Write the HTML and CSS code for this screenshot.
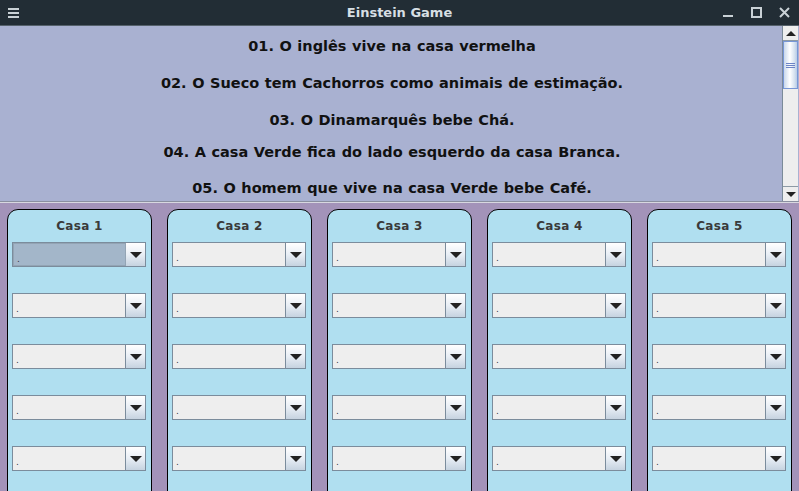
FILE: index.html
```html
<!DOCTYPE html>
<html>
<head>
<meta charset="utf-8">
<link rel="stylesheet" href="styles.css">
</head>
<body>
<div class="window">
  <div class="titlebar">
    <svg class="menu-icon" width="11" height="10" viewBox="0 0 11 10"><rect x="0" y="0" width="11" height="2" fill="#c9d1d6"/><rect x="0" y="4" width="11" height="2" fill="#c9d1d6"/><rect x="0" y="8" width="11" height="2" fill="#c9d1d6"/></svg>
    <div class="title">Einstein Game</div>
    <div class="controls">
      <svg width="11" height="11" viewBox="0 0 11 11"><rect x="0" y="8" width="10" height="2" fill="#c9d1d6"/></svg>
      <svg width="11" height="11" viewBox="0 0 11 11"><rect x="1" y="1" width="9" height="9" fill="none" stroke="#c9d1d6" stroke-width="2"/></svg>
      <svg width="11" height="11" viewBox="0 0 11 11"><path d="M1 1 L10 10 M10 1 L1 10" stroke="#c9d1d6" stroke-width="2"/></svg>
    </div>
  </div>
  <div class="rules">
    <div class="rules-text">
      <p class="rule r1">01. O inglês vive na casa vermelha</p>
      <p class="rule r2">02. O Sueco tem Cachorros como animais de estimação.</p>
      <p class="rule r3">03. O Dinamarquês bebe Chá.</p>
      <p class="rule r4">04. A casa Verde fica do lado esquerdo da casa Branca.</p>
      <p class="rule r5">05. O homem que vive na casa Verde bebe Café.</p>
    </div>
    <div class="scrollbar">
      <div class="sb-btn"><span class="tri-up"></span></div>
      <div class="sb-thumb"><span class="grip"></span></div>
      <div class="sb-track"></div>
      <div class="sb-btn sb-btn-down"><span class="tri-down"></span></div>
    </div>
  </div>
  <div class="houses">
    <div class="house">
      <div class="house-title">Casa 1</div>
      <div class="combos">
        <div class="combo selected"><div class="field">.</div><div class="arrow"><span class="tri-down"></span></div></div>
        <div class="combo"><div class="field">.</div><div class="arrow"><span class="tri-down"></span></div></div>
        <div class="combo"><div class="field">.</div><div class="arrow"><span class="tri-down"></span></div></div>
        <div class="combo"><div class="field">.</div><div class="arrow"><span class="tri-down"></span></div></div>
        <div class="combo"><div class="field">.</div><div class="arrow"><span class="tri-down"></span></div></div>
      </div>
    </div>
    <div class="house">
      <div class="house-title">Casa 2</div>
      <div class="combos">
        <div class="combo"><div class="field">.</div><div class="arrow"><span class="tri-down"></span></div></div>
        <div class="combo"><div class="field">.</div><div class="arrow"><span class="tri-down"></span></div></div>
        <div class="combo"><div class="field">.</div><div class="arrow"><span class="tri-down"></span></div></div>
        <div class="combo"><div class="field">.</div><div class="arrow"><span class="tri-down"></span></div></div>
        <div class="combo"><div class="field">.</div><div class="arrow"><span class="tri-down"></span></div></div>
      </div>
    </div>
    <div class="house">
      <div class="house-title">Casa 3</div>
      <div class="combos">
        <div class="combo"><div class="field">.</div><div class="arrow"><span class="tri-down"></span></div></div>
        <div class="combo"><div class="field">.</div><div class="arrow"><span class="tri-down"></span></div></div>
        <div class="combo"><div class="field">.</div><div class="arrow"><span class="tri-down"></span></div></div>
        <div class="combo"><div class="field">.</div><div class="arrow"><span class="tri-down"></span></div></div>
        <div class="combo"><div class="field">.</div><div class="arrow"><span class="tri-down"></span></div></div>
      </div>
    </div>
    <div class="house">
      <div class="house-title">Casa 4</div>
      <div class="combos">
        <div class="combo"><div class="field">.</div><div class="arrow"><span class="tri-down"></span></div></div>
        <div class="combo"><div class="field">.</div><div class="arrow"><span class="tri-down"></span></div></div>
        <div class="combo"><div class="field">.</div><div class="arrow"><span class="tri-down"></span></div></div>
        <div class="combo"><div class="field">.</div><div class="arrow"><span class="tri-down"></span></div></div>
        <div class="combo"><div class="field">.</div><div class="arrow"><span class="tri-down"></span></div></div>
      </div>
    </div>
    <div class="house">
      <div class="house-title">Casa 5</div>
      <div class="combos">
        <div class="combo"><div class="field">.</div><div class="arrow"><span class="tri-down"></span></div></div>
        <div class="combo"><div class="field">.</div><div class="arrow"><span class="tri-down"></span></div></div>
        <div class="combo"><div class="field">.</div><div class="arrow"><span class="tri-down"></span></div></div>
        <div class="combo"><div class="field">.</div><div class="arrow"><span class="tri-down"></span></div></div>
        <div class="combo"><div class="field">.</div><div class="arrow"><span class="tri-down"></span></div></div>
      </div>
    </div>
  </div>
</div>
</body>
</html>
```
FILE: styles.css
```css
* { box-sizing: border-box; }
html, body { margin: 0; padding: 0; }
body {
  width: 799px;
  height: 491px;
  overflow: hidden;
  font-family: "DejaVu Sans", sans-serif;
  background: #a393b9;
}
.window { display: flex; flex-direction: column; height: 491px; }

.titlebar {
  height: 26px;
  flex: none;
  background: #222d35;
  border-bottom: 1px solid #55616b;
  display: grid;
  grid-template-columns: 1fr auto 1fr;
  align-items: center;
  padding: 0 9px 0 8px;
}
.menu-icon { margin-top: 1px; }
.title {
  text-align: center;
  color: #d7dfe4;
  font-weight: bold;
  font-size: 13px;
  padding-left: 1px;
}
.controls { display: flex; gap: 17px; align-items: center; justify-self: end; }
.controls svg { display: block; }

.rules {
  height: 176px;
  flex: none;
  display: flex;
  background: #a9b1d1;
  border-bottom: 1px solid #8a8fa0;
}
.rules-text { flex: 1; }
.rule {
  margin: 0;
  height: 20px;
  line-height: 20px;
  text-align: center;
  font-size: 14.5px;
  font-weight: bold;
  word-spacing: 0.5px;
  color: #111111;
  padding-left: 2px;
}
.r1 { margin-top: 10px; }
.r2 { margin-top: 17px; }
.r3 { margin-top: 17px; }
.r4 { margin-top: 12px; }
.r5 { margin-top: 16px; }

.scrollbar {
  width: 16px;
  flex: none;
  display: flex;
  flex-direction: column;
  background: #eeeeee;
  border-left: 1px solid #7b8b99;
  margin-right: 1px;
}
.sb-btn {
  height: 15px;
  flex: none;
  background: #eeeeee;
  border-bottom: 1px solid #8d9aa5;
  display: flex;
  align-items: center;
  justify-content: center;
}
.sb-btn-down { border-bottom: none; border-top: 1px solid #8d9aa5; }
.sb-thumb {
  height: 48px;
  flex: none;
  border: 1px solid #7796d6;
  background: linear-gradient(to right, #c9d8ec, #ffffff 45%, #d6e2f0 80%, #b8cbe5);
  display: flex;
  align-items: center;
  justify-content: center;
}
.grip {
  width: 9px;
  height: 5px;
  border-top: 1px solid #6d84c6;
  border-bottom: 1px solid #6d84c6;
  position: relative;
}
.grip::after {
  content: "";
  position: absolute;
  left: 0; right: 0; top: 1px;
  border-top: 1px solid #6d84c6;
}
.sb-track { flex: 1; background: #eeeeee; }

.tri-up {
  width: 0; height: 0;
  border-left: 5px solid transparent;
  border-right: 5px solid transparent;
  border-bottom: 5px solid #222222;
}
.tri-down {
  width: 0; height: 0;
  border-left: 5px solid transparent;
  border-right: 5px solid transparent;
  border-top: 5px solid #222222;
}

.houses {
  flex: 1;
  display: flex;
  gap: 15px;
  padding: 6px 7px 0 7px;
  border-top: 1px solid #d8d8e0;
  overflow: hidden;
}
.house {
  width: 145px;
  flex: none;
  height: 300px;
  background: #b0dff0;
  border: 1.5px solid #000000;
  border-radius: 11px;
  padding: 0 5px 0 4px;
}
.house-title {
  text-align: center;
  font-weight: bold;
  font-size: 12px;
  letter-spacing: 0.3px;
  color: #3a3a3a;
  height: 32px;
  padding-top: 9px;
  padding-left: 1px;
}
.combos { display: flex; flex-direction: column; gap: 26px; }
.combo {
  height: 25px;
  display: flex;
  border: 1px solid #7b8c9c;
  background: #eeeeee;
}
.field {
  flex: 1;
  font-size: 9px;
  color: #334;
  padding: 10px 0 0 3px;
  line-height: 10px;
  background: #eeeeee;
  border-right: 1px solid #7b8c9c;
}
.combo.selected .field { background: #a3b6c9; border: 1px solid #93a4b4; }
.arrow {
  width: 19px;
  flex: none;
  background: linear-gradient(to bottom, #ffffff, #e8eef5 50%, #c6d3e0);
  display: flex;
  align-items: center;
  justify-content: center;
}
.arrow .tri-down { border-left-width: 6px; border-right-width: 6px; border-top-width: 6px; }
```
